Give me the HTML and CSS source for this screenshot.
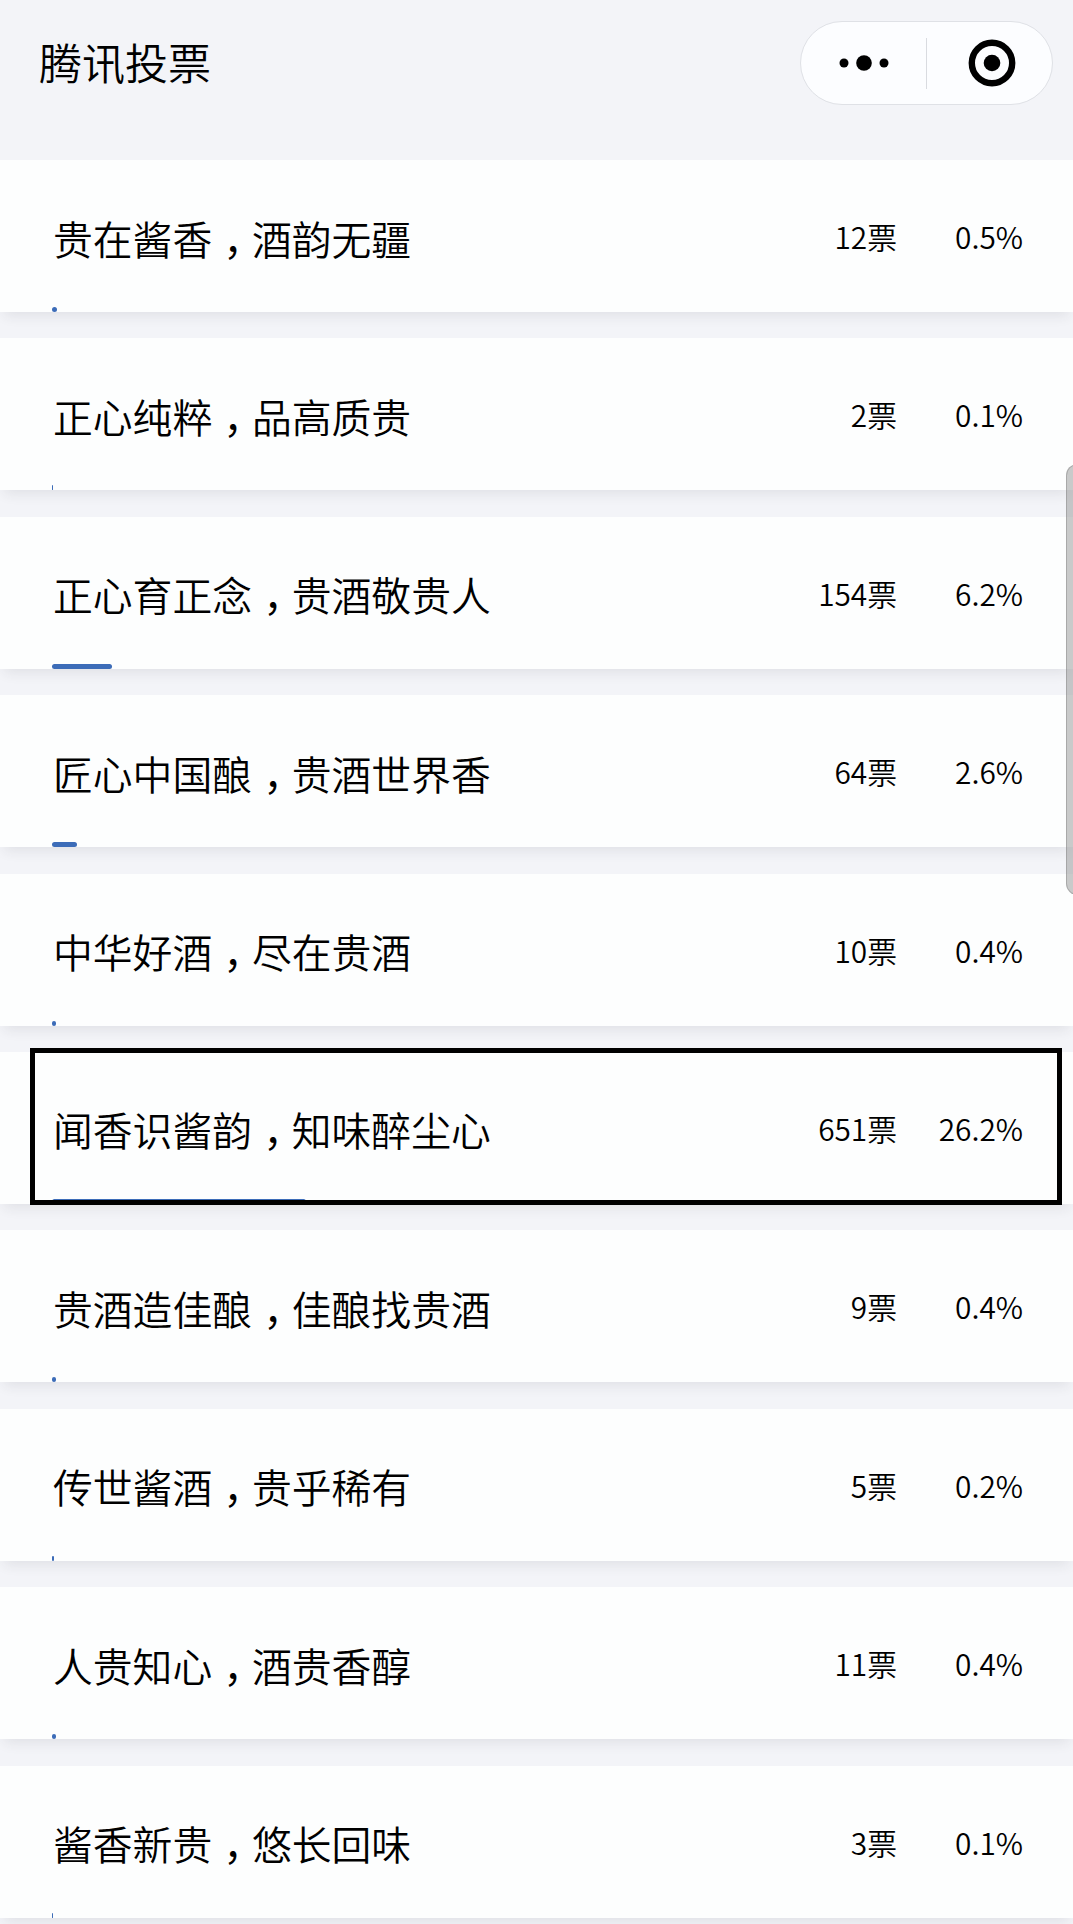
FILE: index.html
```
<!DOCTYPE html>
<html lang="zh-CN">
<head>
    <meta charset="UTF-8">
    <meta name="viewport" content="width=device-width, initial-scale=1.0">
    <title>腾讯投票</title>
    <link rel="stylesheet" href="styles.css">
</head>
<body>
    <header class="navbar">
        <h1>腾讯投票</h1>
        <div class="capsule">
            <button class="capsule-btn" aria-label="更多">
                <svg width="50" height="20" viewBox="0 0 50 20">
                    <circle cx="5" cy="10" r="4.5"/>
                    <circle cx="25" cy="10" r="7.8"/>
                    <circle cx="45" cy="10" r="4.5"/>
                </svg>
            </button>
            <span class="capsule-line"></span>
            <button class="capsule-btn" aria-label="关闭">
                <svg width="48" height="48" viewBox="0 0 48 48">
                    <circle cx="24" cy="24" r="20.2" fill="none" stroke="#000" stroke-width="6.4"/>
                    <circle cx="24" cy="24" r="8.3"/>
                </svg>
            </button>
        </div>
    </header>

    <ul class="vote-list">
        <li class="vote-item">
            <div class="vote-row">
                <span class="name">贵在酱香<span class="comma">，</span>酒韵无疆</span>
                <span class="count">12票</span>
                <span class="percent">0.5%</span>
            </div>
            <div class="track"><div class="bar" style="width: 0.5%"></div></div>
        </li>
        <li class="vote-item">
            <div class="vote-row">
                <span class="name">正心纯粹<span class="comma">，</span>品高质贵</span>
                <span class="count">2票</span>
                <span class="percent">0.1%</span>
            </div>
            <div class="track"><div class="bar" style="width: 0.1%"></div></div>
        </li>
        <li class="vote-item">
            <div class="vote-row">
                <span class="name">正心育正念<span class="comma">，</span>贵酒敬贵人</span>
                <span class="count">154票</span>
                <span class="percent">6.2%</span>
            </div>
            <div class="track"><div class="bar" style="width: 6.2%"></div></div>
        </li>
        <li class="vote-item">
            <div class="vote-row">
                <span class="name">匠心中国酿<span class="comma">，</span>贵酒世界香</span>
                <span class="count">64票</span>
                <span class="percent">2.6%</span>
            </div>
            <div class="track"><div class="bar" style="width: 2.6%"></div></div>
        </li>
        <li class="vote-item">
            <div class="vote-row">
                <span class="name">中华好酒<span class="comma">，</span>尽在贵酒</span>
                <span class="count">10票</span>
                <span class="percent">0.4%</span>
            </div>
            <div class="track"><div class="bar" style="width: 0.4%"></div></div>
        </li>
        <li class="vote-item marked">
            <div class="vote-row">
                <span class="name">闻香识酱韵<span class="comma">，</span>知味醉尘心</span>
                <span class="count">651票</span>
                <span class="percent">26.2%</span>
            </div>
            <div class="track"><div class="bar" style="width: 26.2%"></div></div>
        </li>
        <li class="vote-item">
            <div class="vote-row">
                <span class="name">贵酒造佳酿<span class="comma">，</span>佳酿找贵酒</span>
                <span class="count">9票</span>
                <span class="percent">0.4%</span>
            </div>
            <div class="track"><div class="bar" style="width: 0.4%"></div></div>
        </li>
        <li class="vote-item">
            <div class="vote-row">
                <span class="name">传世酱酒<span class="comma">，</span>贵乎稀有</span>
                <span class="count">5票</span>
                <span class="percent">0.2%</span>
            </div>
            <div class="track"><div class="bar" style="width: 0.2%"></div></div>
        </li>
        <li class="vote-item">
            <div class="vote-row">
                <span class="name">人贵知心<span class="comma">，</span>酒贵香醇</span>
                <span class="count">11票</span>
                <span class="percent">0.4%</span>
            </div>
            <div class="track"><div class="bar" style="width: 0.4%"></div></div>
        </li>
        <li class="vote-item">
            <div class="vote-row">
                <span class="name">酱香新贵<span class="comma">，</span>悠长回味</span>
                <span class="count">3票</span>
                <span class="percent">0.1%</span>
            </div>
            <div class="track"><div class="bar" style="width: 0.1%"></div></div>
        </li>
    </ul>
    <div class="scroll-thumb"></div>
</body>
</html>
```
FILE: styles.css
```
* {
    box-sizing: border-box;
}

body {
    font-family: "Noto Sans CJK SC", sans-serif;
    font-weight: 350;
    background-color: #f3f4f8;
    color: #000;
    margin: 0;
    height: 1924px;
    position: relative;
    overflow: hidden;
}

.navbar {
    display: flex;
    justify-content: space-between;
    align-items: flex-start;
    height: 160px;
    padding: 21px 20px 0 39px;
}

.navbar h1 {
    margin: 0;
    font-size: 43px;
    font-weight: 350;
    line-height: 81px;
}

.capsule {
    display: flex;
    align-items: center;
    width: 253px;
    height: 84px;
    background-color: #fcfdff;
    border: 1px solid #dfe1e6;
    border-radius: 42px;
}

.capsule-btn {
    width: 125px;
    display: flex;
    justify-content: center;
    align-items: center;
    background: none;
    border: none;
    padding: 0;
}

.capsule-btn:last-child {
    padding-left: 4px;
}

.capsule-line {
    width: 1px;
    height: 51px;
    background-color: #d9dbe0;
}

.vote-list {
    list-style: none;
    margin: 0;
    padding: 0;
}

.vote-item {
    position: relative;
    height: 152px;
    margin-bottom: 26.4px;
    padding: 0 50px 0 52px;
    background-color: #fdfefe;
    box-shadow: 0 8px 12px -4px rgba(40, 45, 60, 0.09);
}

.vote-row {
    display: flex;
    align-items: center;
    height: 147px;
    padding: 7px 0 0 1px;
}

.name {
    flex: 1;
    font-size: 39.8px;
}

/* half-width comma centred in a full cell */
.comma {
    padding: 0 0.22em 0 0.28em;
    font-weight: 400;
    font-feature-settings: "halt";
}

.count,
.percent {
    margin-top: -2px;
    font-size: 29.8px;
    text-align: right;
}

.percent {
    width: 126px;
}

.track {
    width: 969px;
    height: 5px;
}

.bar {
    height: 5px;
    background-color: #3c6cb8;
    border-radius: 2.5px;
}

.marked::after {
    content: "";
    position: absolute;
    top: -4px;
    left: 30px;
    box-sizing: border-box;
    width: 1032px;
    height: 157px;
    border: 5px solid #000;
}

.scroll-thumb {
    position: absolute;
    top: 464px;
    right: -16px;
    width: 23px;
    height: 431px;
    background-color: rgba(150, 150, 150, 0.5);
    border: 1px solid rgba(120, 120, 120, 0.4);
    border-radius: 12px;
}
```
